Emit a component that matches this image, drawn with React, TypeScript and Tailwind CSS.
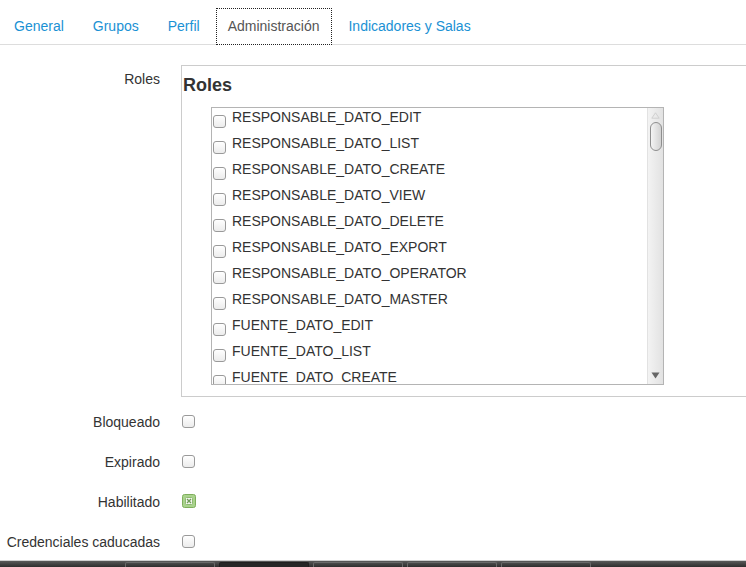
import React from "react";

const roles = [
  "RESPONSABLE_DATO_EDIT",
  "RESPONSABLE_DATO_LIST",
  "RESPONSABLE_DATO_CREATE",
  "RESPONSABLE_DATO_VIEW",
  "RESPONSABLE_DATO_DELETE",
  "RESPONSABLE_DATO_EXPORT",
  "RESPONSABLE_DATO_OPERATOR",
  "RESPONSABLE_DATO_MASTER",
  "FUENTE_DATO_EDIT",
  "FUENTE_DATO_LIST",
  "FUENTE_DATO_CREATE",
];

function Box() {
  return (
    <div className="w-[13px] h-[13px] rounded-[3px] border border-[#9a9a9a] bg-gradient-to-b from-white to-[#ececec] shrink-0" />
  );
}

function CheckedBox() {
  return (
    <svg width="14" height="14" viewBox="0 0 14 14" className="shrink-0">
      <rect x="0.5" y="0.5" width="13" height="13" rx="2" fill="#a9d38c" stroke="#7fae5c" />
      <rect x="3.5" y="3.5" width="7" height="7" rx="1" fill="#f4f8f0" stroke="#8fb872" />
      <path d="M5 5 L9 9 M9 5 L5 9" stroke="#6f9a55" strokeWidth="1.3" />
    </svg>
  );
}

export default function App() {
  const tabs = ["General", "Grupos", "Perfil", "Administración", "Indicadores y Salas"];
  return (
    <div
      className="w-[746px] h-[567px] overflow-hidden bg-white relative text-[14px] text-[#333]"
      style={{ fontFamily: '"Liberation Sans", Arial, sans-serif' }}
    >
      {/* Tabs */}
      <div className="pt-[8px] pl-[2px] border-b border-[#dddddd] h-[45px] flex items-start gap-[5px]">
        {tabs.map((t) => {
          const active = t === "Administración";
          return (
            <div
              key={t}
              className={
                active
                  ? "h-[37px] pl-[11px] pr-[12px] pt-[7px] leading-[20px] text-[#555] bg-white border border-dotted border-[#222] relative -mb-px -mx-px shrink-0"
                  : "h-[36px] px-[12px] leading-[20px] pt-[8px] text-[#1a91d4] shrink-0"
              }
            >
              {t}
            </div>
          );
        })}
      </div>

      {/* Form */}
      <div className="pt-[20px]">
        {/* Roles row */}
        <div className="flex items-start">
          <div className="w-[160px] shrink-0 text-right pt-[4px] leading-[20px]">Roles</div>
          <div className="ml-[21px] w-[640px] shrink-0 h-[332px] border border-[#cccccc] pt-[9px]">
            <div className="font-bold text-[18px] leading-[20px] pl-[1px]">Roles</div>
            <div className="ml-[29px] mt-[12px] w-[453px] h-[278px] border border-[#b4b4b4] flex overflow-hidden">
              <div className="flex-1 overflow-hidden pl-[1px]">
                {roles.map((r) => (
                  <div key={r} className="h-[26px] flex items-start">
                    <div className="mt-[7px]">
                      <Box />
                    </div>
                    <div className="ml-[6px] leading-[18px] whitespace-nowrap">{r}</div>
                  </div>
                ))}
              </div>
              {/* scrollbar */}
              <div className="w-[16px] h-full shrink-0 border-l border-[#e2e2e2] bg-gradient-to-r from-[#f3f3f3] to-[#e2e2e2] flex flex-col items-center">
                <svg width="9" height="7" viewBox="0 0 9 7" className="mt-[4px]">
                  <path d="M4.5 0.8 L8.2 6.2 L0.8 6.2 Z" fill="none" stroke="#cfcfcf" strokeWidth="1" />
                </svg>
                <div className="mt-[3px] w-[12px] h-[29px] rounded-full border border-[#8e8e8e] bg-gradient-to-r from-[#f4f4f4] to-[#d2d2d2]" />
                <div className="flex-1" />
                <svg width="9" height="7" viewBox="0 0 9 7" className="mb-[5px]">
                  <path d="M0.5 0.5 L8.5 0.5 L4.5 6.5 Z" fill="#666" />
                </svg>
              </div>
            </div>
          </div>
        </div>

        {/* Bool rows */}
        <div className="mt-[15px] flex flex-col gap-[20px]">
          {[
            ["Bloqueado", false],
            ["Expirado", false],
            ["Habilitado", true],
            ["Credenciales caducadas", false],
          ].map(([label, checked]) => (
            <div key={label as string} className="flex items-center h-[20px]">
              <div className="w-[160px] shrink-0 text-right leading-[20px] whitespace-nowrap">{label as string}</div>
              <div className="ml-[22px] mt-[-2px]">{checked ? <CheckedBox /> : <Box />}</div>
            </div>
          ))}
        </div>
      </div>

      {/* bottom bar */}
      <div className="absolute left-0 right-0 bottom-0 h-[7px] border-t border-[#cfcfcf] bg-gradient-to-b from-[#5a5a5a] to-[#2e2e2e] flex gap-[4px] pl-[125px] pt-[1px]">
        <div className="w-[90px] h-full rounded-t-[2px] border border-[#6a6a6a] border-b-0" />
        <div className="w-[90px] h-full rounded-t-[2px] border border-[#1f1f1f] bg-[#262626] border-b-0" />
        <div className="w-[90px] h-full rounded-t-[2px] border border-[#6a6a6a] border-b-0" />
        <div className="w-[90px] h-full rounded-t-[2px] border border-[#6a6a6a] border-b-0" />
        <div className="w-[90px] h-full rounded-t-[2px] border border-[#6a6a6a] border-b-0" />
      </div>
    </div>
  );
}
